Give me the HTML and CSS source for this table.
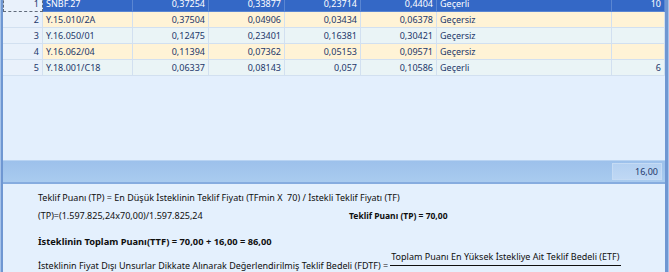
FILE: index.html
```html
<!DOCTYPE html>
<html lang="tr">
<head>
<meta charset="utf-8">
<link rel="stylesheet" href="styles.css">
</head>
<body>
<div class="frame">
  <div class="main">
    <div class="grid">
      <div class="row sel">
        <div class="c idx focus">1</div><div class="c code">SNBF.27</div><div class="c n">0,37254</div><div class="c n">0,33877</div><div class="c n">0,23714</div><div class="c n">0,4404</div><div class="c st">Geçerli</div><div class="c n last">10</div>
      </div>
      <div class="row odd">
        <div class="c idx">2</div><div class="c code">Y.15.010/2A</div><div class="c n">0,37504</div><div class="c n">0,04906</div><div class="c n">0,03434</div><div class="c n">0,06378</div><div class="c st">Geçersiz</div><div class="c n last"></div>
      </div>
      <div class="row even">
        <div class="c idx">3</div><div class="c code">Y.16.050/01</div><div class="c n">0,12475</div><div class="c n">0,23401</div><div class="c n">0,16381</div><div class="c n">0,30421</div><div class="c st">Geçersiz</div><div class="c n last"></div>
      </div>
      <div class="row odd">
        <div class="c idx">4</div><div class="c code">Y.16.062/04</div><div class="c n">0,11394</div><div class="c n">0,07362</div><div class="c n">0,05153</div><div class="c n">0,09571</div><div class="c st">Geçersiz</div><div class="c n last"></div>
      </div>
      <div class="row even">
        <div class="c idx">5</div><div class="c code">Y.18.001/C18</div><div class="c n">0,06337</div><div class="c n">0,08143</div><div class="c n">0,057</div><div class="c n">0,10586</div><div class="c st">Geçerli</div><div class="c n last">6</div>
      </div>
    </div>
    <div class="filler"></div>
    <div class="footer">
      <div class="sum">16,00</div>
    </div>
    <div class="panel">
      <p class="line l1">Teklif Puanı (TP) = En Düşük İsteklinin Teklif Fiyatı (TFmin X&nbsp; 70) / İstekli Teklif Fiyatı (TF)</p>
      <div class="line l2"><span class="calc">(TP)=(1.597.825,24x70,00)/1.597.825,24</span><b class="tp">Teklif Puanı (TP) = 70,00</b></div>
      <p class="line l3"><b>İsteklinin Toplam Puanı(TTF) = 70,00 + 16,00 = 86,00</b></p>
      <div class="line l4"><span class="lbl">İsteklinin Fiyat Dışı Unsurlar Dikkate Alınarak Değerlendirilmiş Teklif Bedeli (FDTF) =</span><span class="frac">Toplam Puanı En Yüksek İstekliye Ait Teklif Bedeli (ETF)</span></div>
    </div>
  </div>
</div>
</body>
</html>
```
FILE: styles.css
```css
* { box-sizing: border-box; }
html, body { margin: 0; padding: 0; }
body {
  width: 669px;
  height: 272px;
  overflow: hidden;
  font-family: "Noto Sans", "Open Sans", sans-serif;
  background: #e4effc;
}
.frame {
  display: flex;
  height: 272px;
  border-left: 1px solid #a6c3ea;
  border-right: 1px solid #a6c3ea;
}
.main {
  flex: 1;
  display: flex;
  flex-direction: column;
  border-left: 2px solid #6f97d2;
  border-right: 3px solid #6f97d2;
  overflow: hidden;
}
.grid {
  flex-shrink: 0;
  margin-top: -4px;
  display: flex;
  flex-direction: column;
}
.row {
  display: grid;
  grid-template-columns: 40px 90px 76px 76px 76px 76px 175px 53px;
  height: 16px;
  font-size: 9px;
  color: #22376a;
}
.c {
  line-height: 15px;
  border-right: 1px solid #d2e0f0;
  border-bottom: 1px solid #d2e0f0;
  padding: 0 3px;
  white-space: nowrap;
  overflow: hidden;
}
.n { text-align: right; }
.idx {
  text-align: right;
  background: #e9f1fb;
}
.odd .c { background: #fff3d6; }
.even .c { background: #eaf4f6; }
.odd .idx, .even .idx { background: #e9f1fb; }
.sel .c {
  background: #3468c6;
  color: #ffffff;
  border-right-color: #5a86d2;
  border-bottom-color: #5a86d2;
}
.sel .idx.focus {
  background: #e9f1fb;
  color: #22376a;
  border: 1px dashed #606a7a;
  border-top: none;
}
.filler {
  flex-shrink: 0;
  height: 84px;
  background: #e3effd;
}
.footer {
  flex-shrink: 0;
  height: 24px;
  background: linear-gradient(#9dc1eb, #a9cbef);
  border-top: 1px solid #b8d3f2;
  border-bottom: 2px solid #86acdf;
  display: flex;
  justify-content: flex-end;
  align-items: center;
  padding-right: 3px;
}
.sum {
  width: 50px;
  height: 17px;
  line-height: 16px;
  font-size: 9px;
  text-align: right;
  padding-right: 3px;
  color: #22376a;
  background: linear-gradient(#b4d0f1, #bfd8f4);
  border: 1px solid #c5dbf4;
}
.panel {
  flex: 1;
  overflow: hidden;
  background: #e4f0fd;
  padding: 7px 0 0 35px;
  font-size: 9px;
  color: #0f0f0f;
}
.line { margin: 0; white-space: nowrap; }
.l1 { height: 18px; line-height: 14px; }
.l2 { height: 26px; line-height: 14px; display: flex; }
.calc { width: 311px; }
.tp { font-weight: bold; font-size: 8.5px; }
.l3 { height: 24px; line-height: 14px; font-size: 9.3px; }
.l4 { display: flex; align-items: flex-start; line-height: 14px; }
.lbl { margin-right: 2px; }
.frac {
  font-size: 9px;
  margin-top: -9px;
  border-bottom: 1px solid #0f0f0f;
  padding: 0 1px 1px 1px;
}
```
